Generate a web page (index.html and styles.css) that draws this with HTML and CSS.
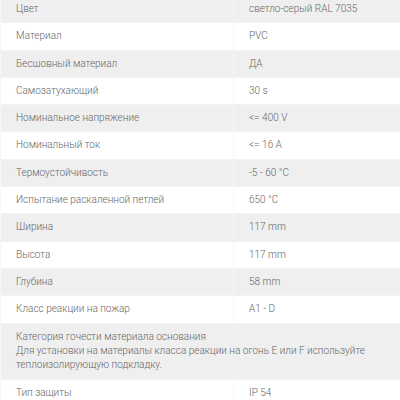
FILE: index.html
```html
<!DOCTYPE html>
<html lang="ru">
<head>
<meta charset="utf-8">
<link rel="stylesheet" href="styles.css">
</head>
<body>
<div class="specs">
  <div class="row grey"><div class="k">Цвет</div><div class="v">светло-серый RAL 7035</div></div>
  <div class="row"><div class="k">Материал</div><div class="v">PVC</div></div>
  <div class="row grey"><div class="k">Бесшовный материал</div><div class="v">ДА</div></div>
  <div class="row"><div class="k">Самозатухающий</div><div class="v">30 s</div></div>
  <div class="row grey"><div class="k">Номинальное напряжение</div><div class="v">&lt;= 400 V</div></div>
  <div class="row"><div class="k">Номинальный ток</div><div class="v">&lt;= 16 A</div></div>
  <div class="row grey"><div class="k">Термоустойчивость</div><div class="v">-5 - 60 °C</div></div>
  <div class="row"><div class="k">Испытание раскаленной петлей</div><div class="v">650 °C</div></div>
  <div class="row grey"><div class="k">Ширина</div><div class="v">117 mm</div></div>
  <div class="row"><div class="k">Высота</div><div class="v">117 mm</div></div>
  <div class="row grey"><div class="k">Глубина</div><div class="v">58 mm</div></div>
  <div class="row"><div class="k">Класс реакции на пожар</div><div class="v">A1 - D</div></div>
  <div class="row grey full"><div class="note">Категория гочести материала основания<br>Для установки на материалы класса реакции на огонь E или F используйте теплоизолирующую подкладку.</div></div>
  <div class="row"><div class="k">Тип защиты</div><div class="v">IP 54</div></div>
</div>
</body>
</html>
```
FILE: styles.css
```css
html, body {
  margin: 0;
  padding: 0;
  background: #ffffff;
}
body {
  font-family: Roboto, "Noto Sans", sans-serif;
  font-size: 10px;
  font-weight: 300;
  color: #666666;
  overflow: hidden;
}
.specs {
  margin-top: -4px;
  border-left: 1px solid #f6f6f6;
}
.row {
  display: grid;
  grid-template-columns: 233px 1fr;
  background: #ffffff;
  border-bottom: 1px solid #f4f4f4;
}
.row.grey {
  background: #efefef;
}
.k, .v {
  padding: 7px 14px 7px 15px;
  line-height: 12.3px;
}
.k {
  border-right: 1px solid #f6f6f6;
}
.row.full {
  display: block;
}
.note {
  padding: 6px 15px 7px;
  line-height: 14px;
}
```
